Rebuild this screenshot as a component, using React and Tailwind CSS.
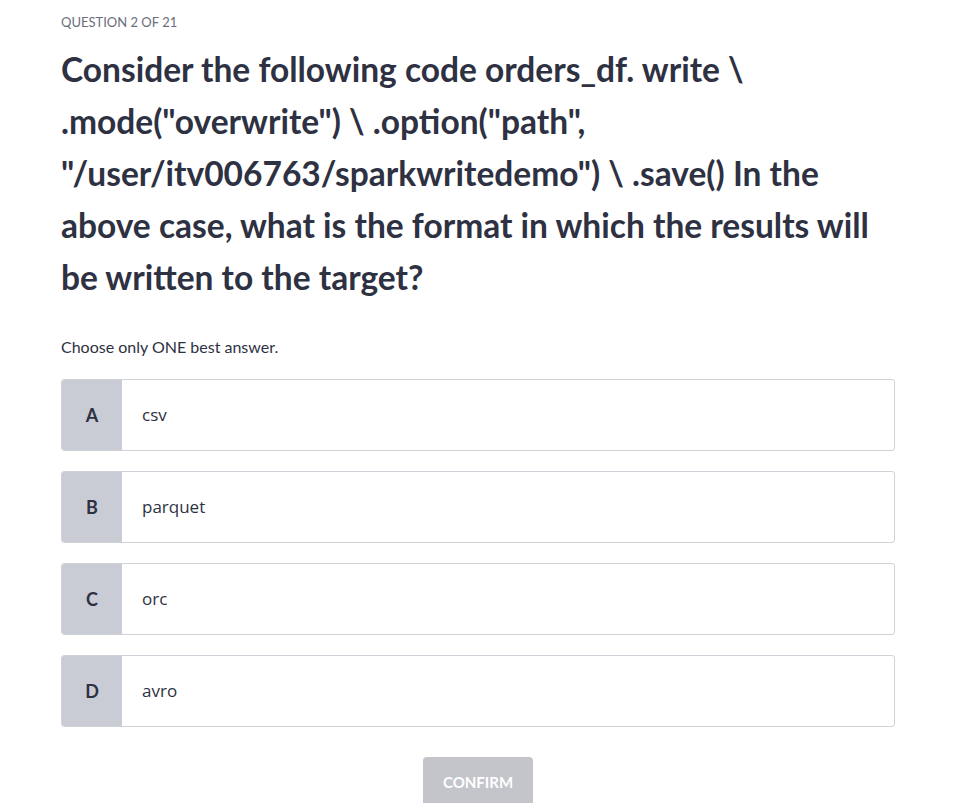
import { useState } from 'react'

const options = [
  { key: 'A', text: 'csv' },
  { key: 'B', text: 'parquet' },
  { key: 'C', text: 'orc' },
  { key: 'D', text: 'avro' },
]

const lines = [
  'Consider the following code orders_df. write \\',
  '.mode("overwrite") \\ .option("path",',
  '"/user/itv006763/sparkwritedemo") \\ .save() In the',
  'above case, what is the format in which the results will',
  'be written to the target?',
]

export default function App() {
  const [selected, setSelected] = useState(null)

  return (
    <div className="bg-white min-h-screen font-['Lato',sans-serif]">
      <div className="w-[834px] ml-[61px] pt-[12px]">
        <p className="text-[13px] leading-5 uppercase text-[#6b6e7a]">Question 2 of 21</p>

        <h1 className="mt-[11px] text-[33.5px] leading-[52px] font-bold text-[#2e3142]">
          {lines.map(l => (
            <span key={l} className="block whitespace-nowrap">{l}</span>
          ))}
        </h1>

        <p className="mt-[32px] text-[16px] leading-6 text-[#2e3142]">Choose only ONE best answer.</p>

        {/* Answer options */}
        <div className="mt-[20px] flex flex-col gap-5">
          {options.map(o => (
            <button
              key={o.key}
              onClick={() => setSelected(o.key)}
              className={`flex h-[72px] border rounded-[3px] overflow-hidden text-left ${selected === o.key ? 'border-[#5624d0]' : 'border-[#d1d2d9]'}`}
            >
              <span className="w-[60px] flex-shrink-0 bg-[#c9ccd4] flex items-center justify-center text-[18px] font-bold text-[#2e3142]">
                {o.key}
              </span>
              <span className="flex-1 flex items-center pl-5 text-[17px] text-[#2e3142] [font-family:'Open_Sans',sans-serif]">
                {o.text}
              </span>
            </button>
          ))}
        </div>

        <div className="mt-[30px] flex justify-center">
          <button className="w-[110px] h-[50px] rounded-[4px] bg-[#c4c5cb] text-white font-bold text-[15px] uppercase">
            Confirm
          </button>
        </div>
      </div>
    </div>
  )
}
